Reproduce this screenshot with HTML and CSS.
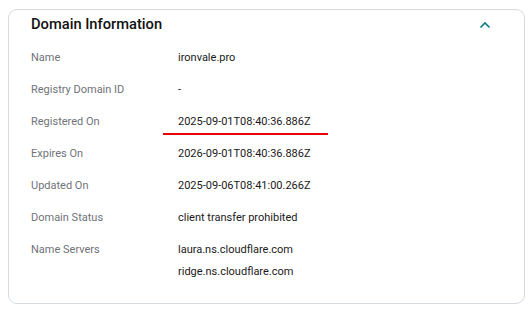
FILE: index.html
```html
<!DOCTYPE html>
<html lang="en">
<head>
    <meta charset="UTF-8">
    <meta name="viewport" content="width=device-width, initial-scale=1.0">
    <title>Domain Information</title>
    <link rel="stylesheet" href="styles.css">
</head>
<body>
    <div class="card">
        <div class="card-header">
            <h2>Domain Information</h2>
            <svg class="chevron" width="12" height="8" viewBox="0 0 12 8">
                <path d="M1.5 6.5 L6 2 L10.5 6.5" fill="none" stroke="#0a7d86" stroke-width="1.6"/>
            </svg>
        </div>
        <div class="info">
            <div class="row">
                <div class="label">Name</div>
                <div class="value">ironvale.pro</div>
            </div>
            <div class="row">
                <div class="label">Registry Domain ID</div>
                <div class="value">-</div>
            </div>
            <div class="row">
                <div class="label">Registered On</div>
                <div class="value marked">2025-09-01T08:40:36.886Z</div>
            </div>
            <div class="row">
                <div class="label">Expires On</div>
                <div class="value">2026-09-01T08:40:36.886Z</div>
            </div>
            <div class="row">
                <div class="label">Updated On</div>
                <div class="value">2025-09-06T08:41:00.266Z</div>
            </div>
            <div class="row">
                <div class="label">Domain Status</div>
                <div class="value">client transfer prohibited</div>
            </div>
            <div class="row">
                <div class="label">Name Servers</div>
                <div class="value">
                    <div>laura.ns.cloudflare.com</div>
                    <div>ridge.ns.cloudflare.com</div>
                </div>
            </div>
        </div>
    </div>
</body>
</html>
```

FILE: styles.css
```css
body {
    margin: 0;
    font-family: Roboto, Arial, sans-serif;
    background-color: #fff;
    color: #111;
}
.card {
    margin: 9px 7px 0 8px;
    height: 295px;
    box-sizing: border-box;
    border: 1px solid #d6dbe0;
    border-radius: 9px;
    padding: 0 22px 0 22px;
}
.card-header {
    display: flex;
    justify-content: space-between;
    align-items: center;
    padding: 3px 11px 7px 0;
}
.card-header h2 {
    margin: 0;
    font-size: 14.7px;
    font-weight: 500;
    line-height: 22px;
    color: #111;
}
.chevron {
    display: block;
    margin-top: 2px;
}
.row {
    display: flex;
    padding: 5px 0;
    font-size: 11px;
    line-height: 22px;
}
.label {
    width: 147px;
    color: #6f7378;
}
.value {
    color: #1a1a1a;
}
.marked {
    position: relative;
}
.marked::after {
    content: "";
    position: absolute;
    left: -15px;
    top: 22px;
    width: 165px;
    height: 2px;
    background-color: #e8000b;
}
```
